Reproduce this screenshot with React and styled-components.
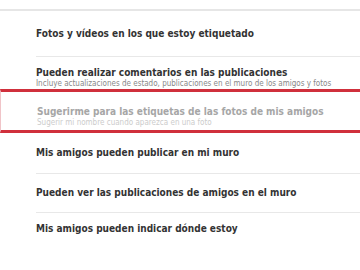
import styled, { createGlobalStyle } from 'styled-components'

const GlobalStyle = createGlobalStyle`
  body {
    margin: 0;
    background: #ffffff;
  }
`

const settings = [
  { title: 'Fotos y vídeos en los que estoy etiquetado', height: 45, pad: 0, first: true },
  {
    title: 'Pueden realizar comentarios en las publicaciones',
    note: 'Incluye actualizaciones de estado, publicaciones en el muro de los amigos y fotos',
    height: 33,
    pad: 10,
  },
  {
    title: 'Sugerirme para las etiquetas de las fotos de mis amigos',
    note: 'Sugerir mi nombre cuando aparezca en una foto',
    height: 38,
    pad: 14,
    marked: true,
  },
  { title: 'Mis amigos pueden publicar en mi muro', height: 40, pad: 0, noLine: true },
  { title: 'Pueden ver las publicaciones de amigos en el muro', height: 39, pad: 0 },
  { title: 'Mis amigos pueden indicar dónde estoy', height: 40, pad: 10 },
]

function App() {
  return (
    <>
      <GlobalStyle />
      <Page>
        <TopRule />
        <List>
          {settings.map((s) => {
            const body = (
              <>
                <Title $muted={s.marked}>{s.title}</Title>
                {s.note && <Note $muted={s.marked}>{s.note}</Note>}
              </>
            )
            if (s.marked) {
              return (
                <Marked key={s.title}>
                  <Row $height={s.height} $pad={s.pad} $noLine>
                    {body}
                  </Row>
                </Marked>
              )
            }
            return (
              <Row key={s.title} $height={s.height} $pad={s.pad} $noLine={s.first || s.noLine}>
                {body}
              </Row>
            )
          })}
        </List>
      </Page>
    </>
  )
}

const Page = styled.div`
  width: 360px;
  height: 270px;
  overflow: hidden;
  background: #ffffff;
  padding-top: 9px;
  box-sizing: border-box;
  font-family: 'DejaVu Sans Condensed', 'DejaVu Sans', sans-serif;
  font-stretch: condensed;
`
const TopRule = styled.div`
  height: 2px;
  background: #e6e6e6;
`
const List = styled.div`
  display: flex;
  flex-direction: column;
`
const Row = styled.div`
  margin-left: 36px;
  height: ${(p) => p.$height}px;
  padding-top: ${(p) => p.$pad}px;
  box-sizing: border-box;
  border-top: ${(p) => (p.$noLine ? 'none' : '1px solid #e8e8e8')};
  display: flex;
  flex-direction: column;
  justify-content: ${(p) => (p.$pad ? 'flex-start' : 'center')};
`
const Marked = styled.div`
  border-top: 3px solid #d0303c;
  border-bottom: 3px solid #d0303c;
  border-left: 1px solid #f0c4c8;
`
const Title = styled.div`
  font-size: 10px;
  font-weight: bold;
  line-height: 12px;
  color: ${(p) => (p.$muted ? '#a6a6a6' : '#333333')};
  white-space: nowrap;
`
const Note = styled.div`
  font-size: 8px;
  line-height: 9px;
  color: ${(p) => (p.$muted ? '#cccccc' : '#888888')};
  white-space: nowrap;
`

export default App
